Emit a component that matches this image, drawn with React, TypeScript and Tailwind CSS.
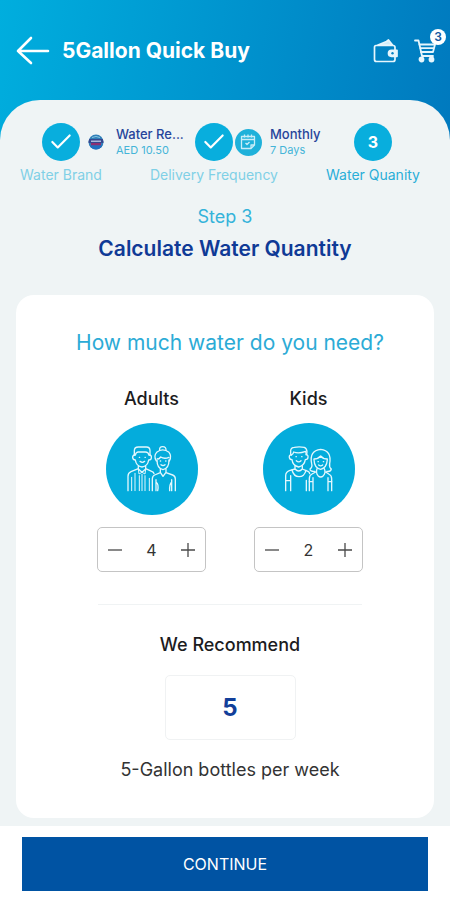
import { useState } from "react";
import type { ReactNode } from "react";
import { Check } from "lucide-react";

function BackIcon() {
  return (
    <svg width="34" height="30" viewBox="0 0 34 30" fill="none" stroke="#fff" strokeWidth="2.6" strokeLinecap="round" strokeLinejoin="round">
      <path d="M32 15H2M15 2L2 15l13 12" />
    </svg>
  );
}

function WalletIcon() {
  return (
    <svg width="25" height="24" viewBox="0 0 25 24" fill="none" stroke="#e6f6fd" strokeWidth="1.7" strokeLinejoin="round">
      <path d="M22 11V8.500Q22 6.500 20 6.500H3Q1.500 6.500 1.500 8.500V20.500Q1.500 22.500 3.500 22.500H20Q22 22.500 22 20.500V17.500" />
      <path d="M5 6L13.500 2.500l2-1.500 4 5z" fill="#cfeefb" />
      <path d="M24 11.300h-5.500a3 3 0 0 0 0 6H24z" fill="#e6f6fd" />
      <circle cx="19.500" cy="14.300" r="1.200" fill="#0583c5" stroke="none" />
    </svg>
  );
}

function CartIcon() {
  return (
    <svg width="24" height="24" viewBox="0 0 24 24" fill="none" stroke="#e6f6fd" strokeWidth="1.800" strokeLinecap="round" strokeLinejoin="round">
      <path d="M1 1.500h3.500L8 17h11" />
      <path d="M5.500 5.500h15.500l-2 7.500H7M6.500 9.200h13.500" />
      <circle cx="7.500" cy="20.500" r="2" fill="#e6f6fd" />
      <circle cx="17.500" cy="20.500" r="2" fill="#e6f6fd" />
    </svg>
  );
}

function BrandLogo() {
  return (
    <svg width="16" height="16" viewBox="0 0 16 16">
      <defs>
        <clipPath id="brand">
          <circle cx="8" cy="8" r="7.500" />
        </clipPath>
      </defs>
      <g clipPath="url(#brand)">
        <rect width="16" height="16" fill="#2f7fb8" />
        <path d="M0 5h16v4H0z" fill="#35488f" />
        <path d="M3 6.500h10v1.500H3z" fill="#a9b8dc" />
        <path d="M3 9h10v2.500H3z" fill="#8c2f72" />
        <path d="M0 11.500h16V16H0z" fill="#1f6fc0" />
        <path d="M4 3.500Q8 1.500 12 3.500" stroke="#8cc6e0" strokeWidth="1" fill="none" />
      </g>
    </svg>
  );
}

function CalendarIcon() {
  return (
    <svg width="16" height="16" viewBox="0 0 16 16" fill="none" stroke="#c9edf8" strokeWidth="1.300" strokeLinejoin="round">
      <path d="M1.500 2.500h13v8.500l-3.500 3.500H1.500zM1.500 5.500h13M14.500 11H11v3.500" />
      <path d="M4.500 0.500v3M8 0.500v3M11.500 0.500v3M5.500 9l1.500 1.500 2.500-2.500" />
    </svg>
  );
}

function AdultsIcon() {
  return (
    <svg width="52" height="50" viewBox="108 195 156 150" fill="none" stroke="#e3f7fd" strokeWidth="4" strokeLinecap="round" strokeLinejoin="round">
      {/* man */}
      <path d="M133 229v-14q0-11 12-11h24q11 0 11 11v14" />
      <path d="M136 228q2-9 9-9h21q9 0 11 9" />
      <path d="M134 228q-7 1-6 8 1 7 8 7 3 19 20 21 17-2 20-21 8 0 8-7 1-7-6-8" />
      <path d="M148 235h1M165 235h1M150 247q7 6 14 0" />
      <path d="M145 261v9l11 10 11-10v-9M145 269l-22 9q-9 4-9 14v43M167 269l18 8q6 2 7 7" />
      <path d="M125 295v40M145 270l2 15 9-5 9 5 2-15M148 290v45M156 286v49M165 290v45M178 298v37M135 283v52" strokeWidth="3" />
      {/* woman */}
      <path d="M209 214q-2-11 9-11t10 11" />
      <path d="M199 246q-9-15 1-26 18-15 37 0 9 11 1 26" />
      <path d="M202 239q4 3 10-5 11 7 25 1" />
      <path d="M201 243q0 26 18 29 18-3 18-29" />
      <path d="M211 246h1M227 246h1M213 257q6 5 12 0" />
      <path d="M211 271v9l8 12 9-12v-9M211 281l-17 7q-7 3-7 12v35M228 281l20 7q8 3 8 12v35" />
      <path d="M198 302v33M198 309q9 6 5 26M245 302v33M245 309q-7 7-6 26" />
    </svg>
  );
}

function KidsIcon() {
  return (
    <svg width="52" height="50" viewBox="126 195 156 150" fill="none" stroke="#e3f7fd" strokeWidth="4" strokeLinecap="round" strokeLinejoin="round">
      {/* boy */}
      <path d="M149 226v-11q1-10 11-10 14-3 30 0 8 3 8 14l-1 7" />
      <path d="M151 228q6-2 7-9 15 6 36-2l2 10" />
      <path d="M151 228q-7-1-6 7 1 7 8 7 2 18 20 22 17-4 20-22 8 0 8-7 1-8-6-8" />
      <path d="M165 233h1M182 233h1M166 245q7 7 14 0" />
      <path d="M162 260v10q11 12 22 0v-10M162 270l-17 5q-11 4-11 15v45M184 270l17 7q5 2 5 7" />
      <path d="M153 273q5 20 21 20t21-19" />
      <path d="M136 305h13M149 290v45M196 304v31" />
      {/* girl */}
      <path d="M207 270q8-5 5-16-8-39 27-43 34 4 27 43-2 11 5 16-2 9-14 7M207 270q0 8 14 7" />
      <path d="M219 240q12 0 20-9 7 9 20 9" />
      <path d="M219 242q1 25 20 29 18-4 20-29" />
      <path d="M231 248h1M247 248h1M233 258q6 5 12 0" />
      <path d="M228 269q-4 12 3 21 8 8 16 0 8-9 3-21M224 279l-11 6q-8 4-8 14v36M254 279l9 6q9 4 9 14v36" />
      <path d="M205 308h11M261 308h11M216 296v39M261 296v39" />
    </svg>
  );
}

type StepProps = {
  label: string;
  labelClass: string;
  mark: ReactNode;
  children?: ReactNode;
};

function Step({ label, labelClass, mark, children }: StepProps) {
  return (
    <li className="flex flex-col items-center gap-1.5">
      <div className="flex items-center justify-center">
        <div className="flex size-[38px] shrink-0 items-center justify-center rounded-full bg-[#08aedd] text-base font-bold text-white">
          {mark}
        </div>
        {/* details hang to the right, the circle stays centred on its label */}
        {children && (
          <div className="w-0">
            <div className="flex w-max items-center">{children}</div>
          </div>
        )}
      </div>
      <span className={`text-sm leading-4 whitespace-nowrap ${labelClass}`}>{label}</span>
    </li>
  );
}

type CounterProps = {
  label: string;
  icon: ReactNode;
  value: number;
  onChange: (value: number) => void;
};

function Counter({ label, icon, value, onChange }: CounterProps) {
  return (
    <div className="flex flex-col items-center">
      <h3 className="text-lg leading-6 font-medium text-[#1c1c1e]">{label}</h3>
      <div className="mt-3 flex size-[92px] items-center justify-center rounded-full bg-[#04acdc]">{icon}</div>
      <div className="mt-3 flex h-[45px] w-[109px] items-center justify-between rounded-[5px] border border-[#c4c4c4] px-[9px] text-[#4a4a4a]">
        <button type="button" aria-label={`Fewer ${label}`} onClick={() => onChange(Math.max(0, value - 1))}>
          <svg width="16" height="16" viewBox="0 0 16 16" stroke="currentColor" strokeWidth="1.300">
            <path d="M1 8h14" />
          </svg>
        </button>
        <span className="text-base text-[#333333]">{value}</span>
        <button type="button" aria-label={`More ${label}`} onClick={() => onChange(value + 1)}>
          <svg width="16" height="16" viewBox="0 0 16 16" stroke="currentColor" strokeWidth="1.300">
            <path d="M1 8h14M8 1v14" />
          </svg>
        </button>
      </div>
    </div>
  );
}

export default function App() {
  const [adults, setAdults] = useState(4);
  const [kids, setKids] = useState(2);
  const bottles = Math.ceil(adults + kids / 2);

  return (
    <div className="flex min-h-screen flex-col bg-[linear-gradient(100deg,#00aede_0%,#0079be_100%)] bg-[length:100%_150px] bg-no-repeat font-['Inter','Liberation_Sans',sans-serif]">
      <header className="flex h-[100px] items-center pt-0.5 pr-3 pl-4">
        <button type="button" aria-label="Back">
          <BackIcon />
        </button>
        <h1 className="ml-3 text-[21px] font-bold text-white">5Gallon Quick Buy</h1>
        <div className="ml-auto flex items-center gap-4">
          <button type="button" aria-label="Wallet">
            <WalletIcon />
          </button>
          <button type="button" aria-label="Cart" className="relative">
            <CartIcon />
            <span className="absolute -top-2.5 -right-2 flex size-4 items-center justify-center rounded-full bg-white text-xs font-semibold text-[#12579f]">
              3
            </span>
          </button>
        </div>
      </header>

      <main className="flex-1 rounded-t-[40px] bg-[#eff4f5] pt-[23px] pb-1.5">
        <ol className="flex justify-between pr-[30px] pl-5">
          <Step label="Water Brand" labelClass="text-[#7fd0e6]" mark={<Check size={26} strokeWidth={2} />}>
            <span className="mr-3 ml-2">
              <BrandLogo />
            </span>
            <div>
              <p className="text-[13px] leading-4 font-medium text-[#27459b]">Water Re...</p>
              <p className="text-[11px] leading-4 text-[#45b4d8]">AED 10.50</p>
            </div>
          </Step>
          <Step label="Delivery Frequency" labelClass="text-[#7fd0e6]" mark={<Check size={26} strokeWidth={2} />}>
            <span className="mr-2 ml-0.5 flex size-[27px] items-center justify-center rounded-full bg-[#1fb1da]">
              <CalendarIcon />
            </span>
            <div>
              <p className="text-[13px] leading-4 font-medium text-[#27459b]">Monthly</p>
              <p className="text-[11px] leading-4 text-[#45b4d8]">7 Days</p>
            </div>
          </Step>
          <Step label="Water Quanity" labelClass="text-[#2aaed8]" mark="3" />
        </ol>

        <p className="mt-5 text-center text-lg leading-7 text-[#35b3da]">Step 3</p>
        <h2 className="mt-1 text-center text-[21px] leading-7 font-semibold text-[#0f3a96]">Calculate Water Quantity</h2>

        <section className="mx-4 mt-8 flex flex-col items-center rounded-[18px] bg-white pt-[34px] pb-9 pl-2.5">
          <h2 className="text-[21px] leading-7 text-[#2cabd6]">How much water do you need?</h2>
          <div className="mt-[30px] flex gap-12">
            <Counter label="Adults" icon={<AdultsIcon />} value={adults} onChange={setAdults} />
            <Counter label="Kids" icon={<KidsIcon />} value={kids} onChange={setKids} />
          </div>
          <hr className="mt-8 w-[264px] border-[#f0f3f4]" />
          <h3 className="mt-7 text-lg leading-6 font-medium text-[#1c1c1e]">We Recommend</h3>
          <output className="mt-[18px] flex h-[65px] w-[131px] items-center justify-center rounded-[5px] border border-[#f0f2f3] text-2xl font-bold text-[#123f9a]">
            {bottles}
          </output>
          <p className="mt-[18px] text-lg leading-6 text-[#333333]">5-Gallon bottles per week</p>
        </section>
      </main>

      <footer className="bg-white px-[22px] pt-[11px] pb-[9px]">
        <button type="button" className="h-[54px] w-full bg-[#0053a3] text-base text-white">
          CONTINUE
        </button>
      </footer>
    </div>
  );
}
